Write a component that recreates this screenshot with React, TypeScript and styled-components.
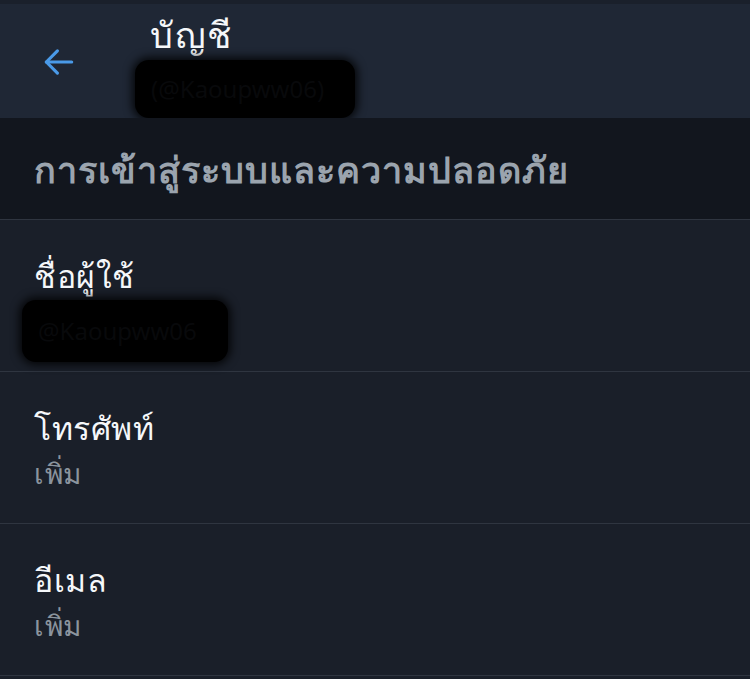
import styled, { createGlobalStyle } from 'styled-components';

const GlobalStyle = createGlobalStyle`
  html, body {
    margin: 0;
    padding: 0;
    background: #1a1f29;
  }
  body {
    font-family: 'Noto Sans', 'DejaVu Sans', sans-serif;
  }
`;

const Screen = styled.div`
  width: 750px;
  height: 679px;
  overflow: hidden;
  background: #1a1f29;
  display: flex;
  flex-direction: column;
`;

const Header = styled.header`
  height: 118px;
  box-sizing: border-box;
  background: #1f2735;
  border-top: 4px solid #1a202b;
  display: flex;
  align-items: flex-start;
  padding: 0 0 0 39px;
`;

const BackButton = styled.button`
  background: none;
  border: 0;
  padding: 0;
  margin-top: 38px;
  width: 40px;
  height: 40px;
  color: #4a9ae8;
  display: flex;
  align-items: center;
  justify-content: center;
  cursor: pointer;
`;

const HeaderText = styled.div`
  display: flex;
  flex-direction: column;
  margin-left: 56px;
`;

const Title = styled.h1`
  margin: 8px 0 0 15px;
  font-size: 36px;
  line-height: 46px;
  font-weight: 400;
  letter-spacing: 1.5px;
  color: #f5f7fa;
`;

const Redacted = styled.div<{ $w: number; $h: number }>`
  width: ${(p) => p.$w}px;
  height: ${(p) => p.$h}px;
  background: #000;
  border-radius: 14px;
  box-shadow: 0 0 8px 3px rgba(0, 0, 0, 0.8);
  color: #08090b;
  font-size: 24px;
  line-height: ${(p) => p.$h}px;
  padding-left: 16px;
  box-sizing: border-box;
  overflow: hidden;
  white-space: nowrap;
`;

const SectionHeader = styled.div`
  height: 102px;
  box-sizing: border-box;
  background: #12161e;
  border-bottom: 1px solid #2f3540;
  display: flex;
  align-items: center;
  padding: 4px 34px 0;
  font-size: 36px;
  font-weight: 700;
  letter-spacing: 1px;
  color: #9ba4ae;
`;

const Row = styled.div`
  height: 152px;
  box-sizing: border-box;
  border-bottom: 1px solid #2f3540;
  padding: 32px 34px 0;
  display: flex;
  flex-direction: column;
`;

const RowLabel = styled.div`
  font-size: 32px;
  line-height: 48px;
  letter-spacing: 0.5px;
  color: #f5f7fa;
`;

const RowValue = styled.div`
  font-size: 28px;
  line-height: 42px;
  letter-spacing: 0.5px;
  color: #8b949e;
`;

const UserRedact = styled.div`
  margin: 0 0 0 -12px;
`;

export default function App() {
  return (
    <Screen>
      <GlobalStyle />
      <Header>
        <BackButton aria-label="กลับ">
          <svg width="38" height="38" viewBox="0 0 24 24" fill="none" stroke="currentColor" strokeWidth="2" strokeLinecap="round" strokeLinejoin="round">
            <path d="M20 12H4" />
            <path d="M11 5l-7 7 7 7" />
          </svg>
        </BackButton>
        <HeaderText>
          <Title>บัญชี</Title>
          <Redacted $w={220} $h={58} style={{ marginTop: 2 }}>
            (@Kaoupww06)
          </Redacted>
        </HeaderText>
      </Header>
      <SectionHeader>การเข้าสู่ระบบและความปลอดภัย</SectionHeader>
      <Row>
        <RowLabel>ชื่อผู้ใช้</RowLabel>
        <UserRedact>
          <Redacted $w={206} $h={62}>
            @Kaoupww06
          </Redacted>
        </UserRedact>
      </Row>
      <Row>
        <RowLabel>โทรศัพท์</RowLabel>
        <RowValue>เพิ่ม</RowValue>
      </Row>
      <Row>
        <RowLabel>อีเมล</RowLabel>
        <RowValue>เพิ่ม</RowValue>
      </Row>
    </Screen>
  );
}
